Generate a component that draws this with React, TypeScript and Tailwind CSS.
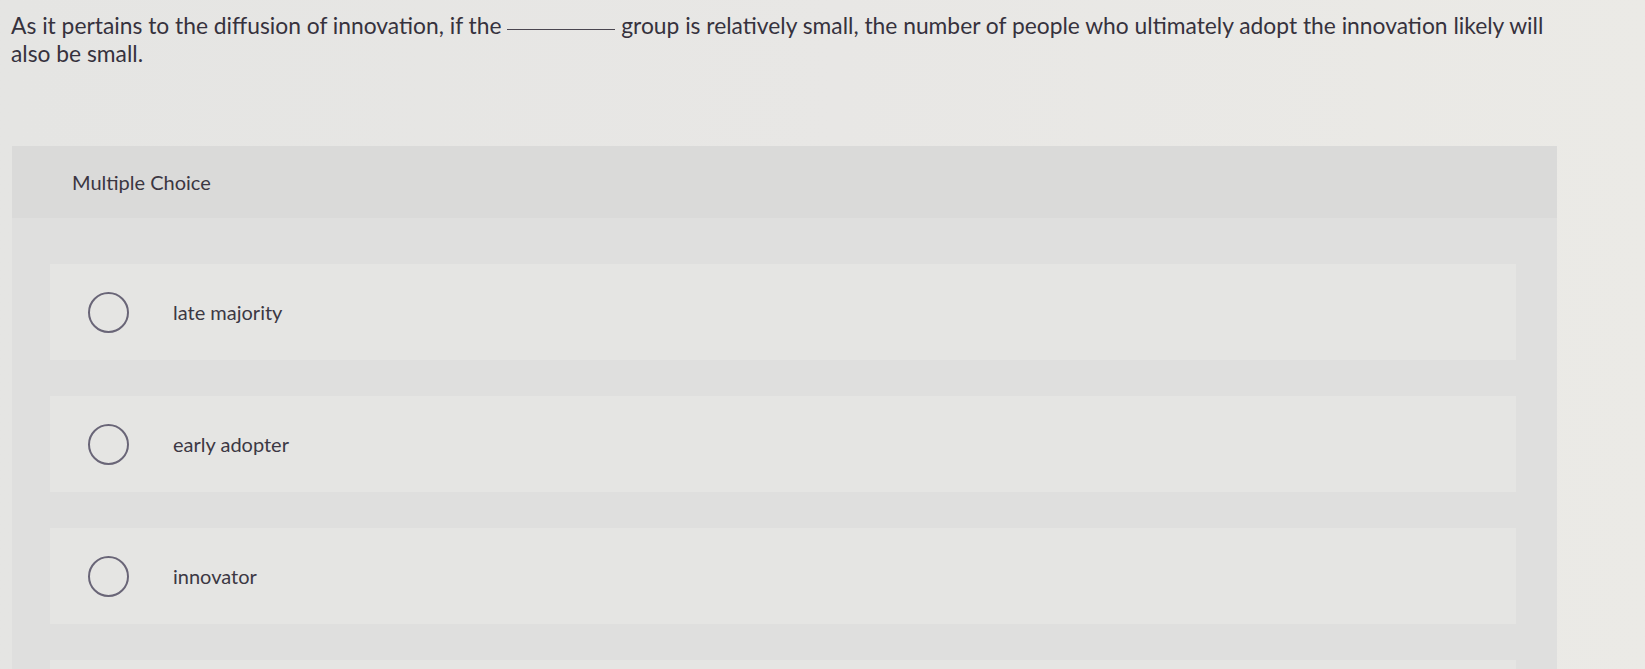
import React from 'react';

const options = ['late majority', 'early adopter', 'innovator', ''];

const App: React.FC = () => {
   return (
      <div
         className="w-full h-[669px] overflow-hidden bg-gradient-to-r from-[#e5e5e3] via-[#e8e7e5] to-[#ebeae6] pl-[11px] pt-[11px]"
         style={{ fontFamily: 'Lato, "Open Sans", sans-serif' }}
      >
         {/* Question */}
         <p className="w-[1545px] text-[22.8px] leading-[28px] text-[#36323d]">
            <span>As it pertains to the diffusion of innovation, if the</span>{' '}
            <span className="inline-block w-[108px] border-b border-[#4a4650] translate-y-[-4px]"></span>{' '}
            <span>group is relatively small, the number of people who ultimately adopt the innovation likely will</span>{' '}
            <span>also be small.</span>
         </p>

         {/* Answer panel */}
         <div className="mt-[79px] ml-[1px] w-[1545px] bg-[#dfdfde]">
            <div className="h-[72px] flex items-center pl-[60px] bg-[#dadad9]">
               <span className="text-[20px] text-[#3a3641]">Multiple Choice</span>
            </div>
            <div className="pt-[46px] pl-[38px] flex flex-col gap-[36px]">
               {options.map((label, i) => (
                  <div key={i} className="w-[1466px] h-[96px] bg-[#e5e5e3] flex items-center pl-[38px]">
                     {label && (
                        <>
                           <span className="w-[41px] h-[41px] rounded-full border-2 border-[#696577] shrink-0"></span>
                           <span className="ml-[44px] text-[20px] text-[#3c3843]">{label}</span>
                        </>
                     )}
                  </div>
               ))}
            </div>
         </div>
      </div>
   );
};

export default App;
